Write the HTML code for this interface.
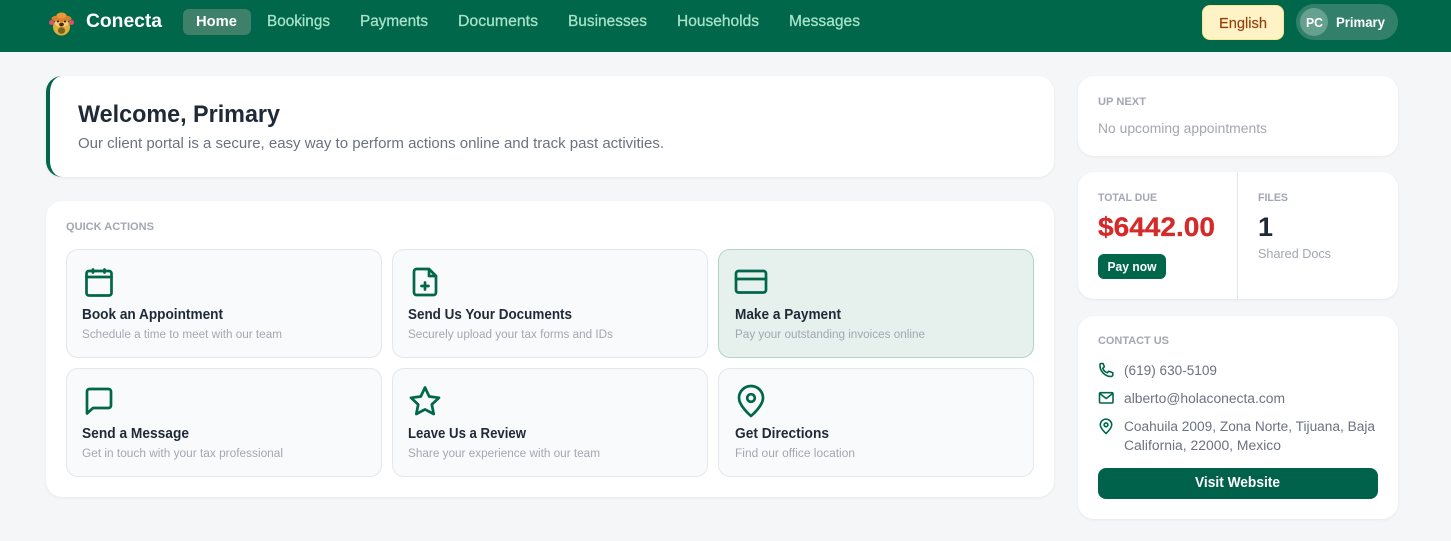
<!DOCTYPE html>
<html lang="en">
<head>
<meta charset="utf-8">
<title>Conecta</title>
<style>
html,body{margin:0;padding:0;width:1451px;height:541px;overflow:hidden;background:#f4f6f8;font-family:"Liberation Sans",sans-serif}
.b{position:absolute;box-sizing:border-box}
.card{background:#fff;border-radius:16px;box-shadow:0 1px 3px rgba(0,0,0,.06)}
.tile{background:#f9fafb;border:1px solid #e5e7eb;border-radius:12px;width:316px;height:109px}
svg{position:absolute;left:0;top:0}
text{font-family:"Liberation Sans",sans-serif}
.nav{font-size:15.5px;fill:#a8e3c9;stroke:#a8e3c9;stroke-width:.25}
.lab{font-size:11px;font-weight:700;fill:#a3a7b2}
.tt{font-size:14.500px;font-weight:700;fill:#1f2937}
.ts{font-size:11.500px;fill:#a3a7b2}
.ct{font-size:13.500px;fill:#6b7280}
.i{fill:none;stroke:#00674a;stroke-width:2.7;stroke-linecap:round;stroke-linejoin:round}
.j{fill:none;stroke:#00674a;stroke-width:1.6;stroke-linecap:round;stroke-linejoin:round}
</style>
</head>
<body>
<div class="b" style="left:0;top:0;width:1451px;height:52px;background:#00674a"></div>
<div class="b" style="left:183px;top:9px;width:68px;height:26px;border-radius:6px;background:#3e8069"></div>
<div class="b" style="left:1202px;top:5px;width:82px;height:35px;border-radius:8px;background:#fef3c7;border:1px solid #fde68a"></div>
<div class="b" style="left:1296px;top:4px;width:102px;height:36px;border-radius:18px;background:#33806a"></div>
<div class="b" style="left:1300px;top:8px;width:28px;height:28px;border-radius:50%;background:#66a08e"></div>

<div class="b card" style="left:46px;top:76px;width:1008px;height:101px;border-left:4px solid #00674a"></div>
<div class="b card" style="left:46px;top:201px;width:1008px;height:296px"></div>
<div class="b tile" style="left:66px;top:249px"></div>
<div class="b tile" style="left:392px;top:249px"></div>
<div class="b tile" style="left:718px;top:249px;background:#e6f0ec;border-color:#b5d4c9"></div>
<div class="b tile" style="left:66px;top:368px"></div>
<div class="b tile" style="left:392px;top:368px"></div>
<div class="b tile" style="left:718px;top:368px"></div>

<div class="b card" style="left:1078px;top:76px;width:320px;height:80px"></div>
<div class="b card" style="left:1078px;top:172px;width:320px;height:127px"></div>
<div class="b" style="left:1237px;top:172px;width:1px;height:127px;background:#e5e7eb"></div>
<div class="b card" style="left:1078px;top:316px;width:320px;height:203px"></div>
<div class="b" style="left:1098px;top:254px;width:68px;height:25px;border-radius:6px;background:#00674a"></div>
<div class="b" style="left:1098px;top:468px;width:280px;height:31px;border-radius:8px;background:#00624a"></div>

<svg width="1451" height="541" viewBox="0 0 1451 541">
  <!-- logo -->
  <g>
    <ellipse cx="61.500" cy="27" rx="8.500" ry="8.500" fill="#e0b03c"/>
    <ellipse cx="61.500" cy="23" rx="6.500" ry="4" fill="#f0cf7a"/>
    <ellipse cx="61.500" cy="30.500" rx="3.600" ry="3.300" fill="#7a6420"/>
    <ellipse cx="61.500" cy="18.500" rx="10" ry="3.500" fill="#d9822b"/>
    <ellipse cx="61.500" cy="15.500" rx="5" ry="3" fill="#e89a38"/>
    <circle cx="58" cy="21.500" r="1" fill="#2a1a0c"/>
    <circle cx="65" cy="21.500" r="1" fill="#2a1a0c"/>
    <ellipse cx="61.500" cy="24.500" rx="2.400" ry="2" fill="#5a2414"/>
    <circle cx="51.500" cy="22.500" r="2.500" fill="#e4506a"/>
    <circle cx="71.500" cy="22.500" r="2.500" fill="#e4506a"/>
  </g>

  <!-- nav -->
  <text x="86" y="27" font-size="19" font-weight="700" fill="#fff" textLength="76" lengthAdjust="spacingAndGlyphs">Conecta</text>
  <text x="196" y="26" font-size="15" font-weight="700" fill="#fff" textLength="41" lengthAdjust="spacingAndGlyphs">Home</text>
  <text class="nav" x="267" y="26" textLength="63" lengthAdjust="spacingAndGlyphs">Bookings</text>
  <text class="nav" x="360" y="26" textLength="68" lengthAdjust="spacingAndGlyphs">Payments</text>
  <text class="nav" x="458" y="26" textLength="80" lengthAdjust="spacingAndGlyphs">Documents</text>
  <text class="nav" x="568" y="26" textLength="79" lengthAdjust="spacingAndGlyphs">Businesses</text>
  <text class="nav" x="677" y="26" textLength="82" lengthAdjust="spacingAndGlyphs">Households</text>
  <text class="nav" x="789" y="26" textLength="71" lengthAdjust="spacingAndGlyphs">Messages</text>
  <text x="1219" y="28" font-size="14.500" fill="#92400e" stroke="#92400e" stroke-width=".15" textLength="48" lengthAdjust="spacingAndGlyphs">English</text>
  <text x="1306" y="27" font-size="13" font-weight="700" fill="#fff" textLength="17" lengthAdjust="spacingAndGlyphs">PC</text>
  <text x="1336" y="27" font-size="13.500" font-weight="700" fill="#fff" textLength="49" lengthAdjust="spacingAndGlyphs">Primary</text>

  <!-- welcome -->
  <text x="78" y="122" font-size="24.500" font-weight="700" fill="#1f2937" textLength="202" lengthAdjust="spacingAndGlyphs">Welcome, Primary</text>
  <text x="78" y="148" font-size="15" fill="#6b7280" textLength="586" lengthAdjust="spacingAndGlyphs">Our client portal is a secure, easy way to perform actions online and track past activities.</text>

  <!-- quick actions -->
  <text class="lab" x="66" y="230" textLength="88" lengthAdjust="spacingAndGlyphs">QUICK ACTIONS</text>

  <text class="tt" x="82" y="319" textLength="141" lengthAdjust="spacingAndGlyphs">Book an Appointment</text>
  <text class="ts" x="82" y="338" textLength="200" lengthAdjust="spacingAndGlyphs">Schedule a time to meet with our team</text>
  <text class="tt" x="408" y="319" textLength="164" lengthAdjust="spacingAndGlyphs">Send Us Your Documents</text>
  <text class="ts" x="408" y="338" textLength="205" lengthAdjust="spacingAndGlyphs">Securely upload your tax forms and IDs</text>
  <text class="tt" x="735" y="319" textLength="106" lengthAdjust="spacingAndGlyphs">Make a Payment</text>
  <text class="ts" x="735" y="338" textLength="190" lengthAdjust="spacingAndGlyphs">Pay your outstanding invoices online</text>
  <text class="tt" x="82" y="438" textLength="107" lengthAdjust="spacingAndGlyphs">Send a Message</text>
  <text class="ts" x="82" y="457" textLength="201" lengthAdjust="spacingAndGlyphs">Get in touch with your tax professional</text>
  <text class="tt" x="408" y="438" textLength="118" lengthAdjust="spacingAndGlyphs">Leave Us a Review</text>
  <text class="ts" x="408" y="457" textLength="192" lengthAdjust="spacingAndGlyphs">Share your experience with our team</text>
  <text class="tt" x="735" y="438" textLength="94" lengthAdjust="spacingAndGlyphs">Get Directions</text>
  <text class="ts" x="735" y="457" textLength="120" lengthAdjust="spacingAndGlyphs">Find our office location</text>

  <!-- tile icons -->
  <rect class="i" x="86.500" y="271" width="25" height="24.500" rx="2.500"/>
  <path class="i" d="M86.500 277H111.500M93 269.500V272.500M104.500 269.500V272.500"/>
  <path class="i" d="M429 269H416.500a2.500 2.500 0 0 0-2.500 2.500V292.500a2.500 2.500 0 0 0 2.500 2.500H433.500a2.500 2.500 0 0 0 2.500-2.500V276ZM429 269V276H436M425 282.500V289.500M421.500 286H428.500"/>
  <rect class="i" x="736" y="271" width="30" height="21.500" rx="2.500"/>
  <path class="i" d="M736 279H766"/>
  <path class="i" d="M87 413.500V391.500a2.500 2.500 0 0 1 2.500-2.500H108.500a2.500 2.500 0 0 1 2.500 2.500V405.500a2.500 2.500 0 0 1-2.500 2.500H93Z"/>
  <path class="i" d="M425 387.500L429.200 396.500L439 397.800L431.800 404.500L433.700 414L425 409.400L416.300 414L418.200 404.500L411 397.800L420.800 396.500Z"/>
  <path class="i" d="M751 416C751 416 763 406 763 398A12 12 0 0 0 739 398C739 406 751 416 751 416Z"/>
  <circle class="i" cx="751" cy="398" r="3.800"/>

  <!-- right column -->
  <text class="lab" x="1098" y="105" textLength="48" lengthAdjust="spacingAndGlyphs">UP NEXT</text>
  <text x="1098" y="133" font-size="13.500" fill="#a3a7b2" textLength="169" lengthAdjust="spacingAndGlyphs">No upcoming appointments</text>
  <text class="lab" x="1098" y="201" textLength="59" lengthAdjust="spacingAndGlyphs">TOTAL DUE</text>
  <text x="1098" y="236" font-size="27" font-weight="700" fill="#d42a2a" stroke="#d42a2a" stroke-width=".3" textLength="117" lengthAdjust="spacingAndGlyphs">$6442.00</text>
  <text x="1107.500" y="271" font-size="12.500" font-weight="700" fill="#fff" textLength="49" lengthAdjust="spacingAndGlyphs">Pay now</text>
  <text class="lab" x="1258" y="201" textLength="30" lengthAdjust="spacingAndGlyphs">FILES</text>
  <text x="1258" y="236" font-size="27" font-weight="700" fill="#1f2937">1</text>
  <text x="1258" y="258" font-size="12.500" fill="#a3a7b2" textLength="73" lengthAdjust="spacingAndGlyphs">Shared Docs</text>
  <text class="lab" x="1098" y="344" textLength="71" lengthAdjust="spacingAndGlyphs">CONTACT US</text>
  <text class="ct" x="1124" y="375" textLength="93" lengthAdjust="spacingAndGlyphs">(619) 630-5109</text>
  <text class="ct" x="1124" y="403" textLength="161" lengthAdjust="spacingAndGlyphs">alberto@holaconecta.com</text>
  <text class="ct" x="1124" y="431" textLength="251" lengthAdjust="spacingAndGlyphs">Coahuila 2009, Zona Norte, Tijuana, Baja</text>
  <text class="ct" x="1124" y="450" textLength="157" lengthAdjust="spacingAndGlyphs">California, 22000, Mexico</text>
  <text x="1195" y="487" font-size="14.500" font-weight="700" fill="#fff" textLength="85" lengthAdjust="spacingAndGlyphs">Visit Website</text>

  <!-- contact icons -->
  <path class="j" d="M1100 364.500C1099.500 371 1105 376.500 1111 376.500C1112 376.500 1112.800 375.700 1112.800 374.700V372.800L1108.800 371.200L1107.200 372.800C1105.200 372 1103.500 370.300 1102.800 368.300L1104.400 366.700L1103 363.500H1101C1100.400 363.500 1100 364 1100 364.500Z"/>
  <rect class="j" x="1099.500" y="392.700" width="13.500" height="10.300" rx="1.200"/>
  <path class="j" d="M1099.800 393.500L1106.200 398.500L1112.700 393.500"/>
  <path class="j" d="M1106 433.500C1106 433.500 1111.700 428.500 1111.700 424.800A5.700 5.700 0 0 0 1100.300 424.800C1100.300 428.500 1106 433.500 1106 433.500Z"/>
  <circle class="j" cx="1106" cy="424.800" r="1.900"/>
</svg>
</body>
</html>
